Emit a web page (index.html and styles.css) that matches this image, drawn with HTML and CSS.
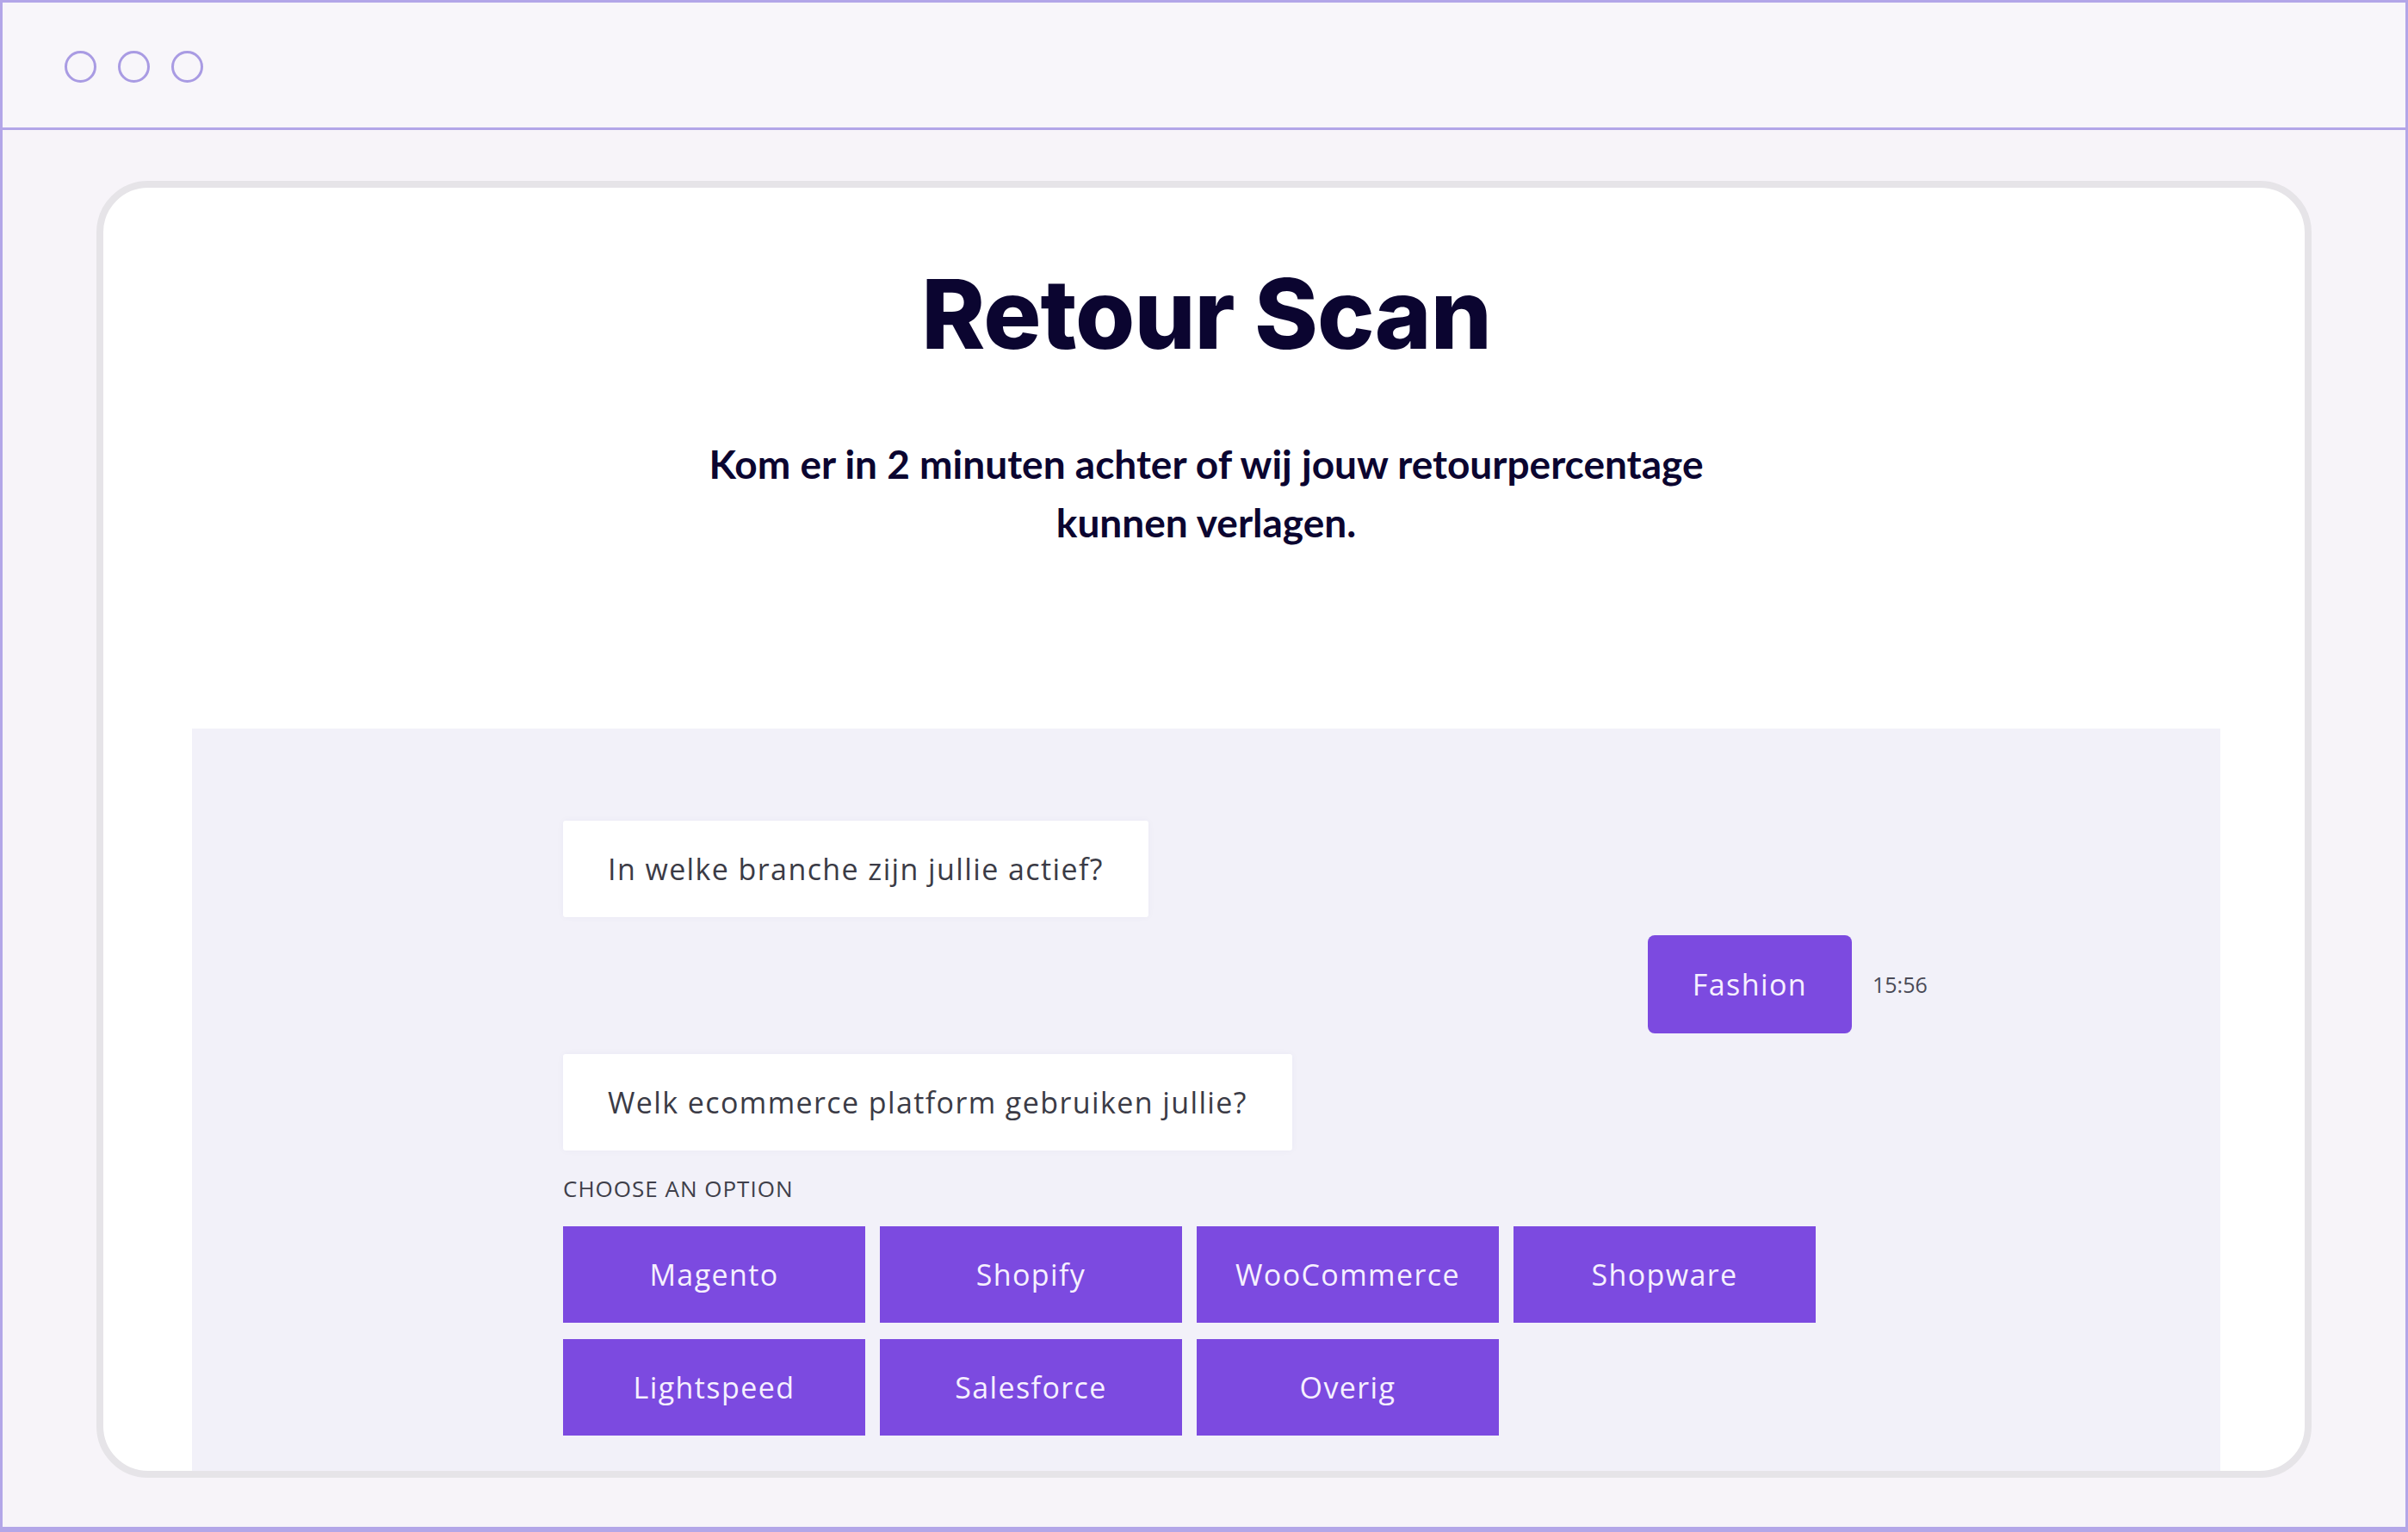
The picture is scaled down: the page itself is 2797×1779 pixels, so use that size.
FILE: index.html
```html
<!DOCTYPE html>
<html lang="nl">
  <head>
    <meta charset="UTF-8" />
    <meta name="viewport" content="width=device-width, initial-scale=1.0" />
    <title>Retour Scan</title>
    <link rel="stylesheet" href="styles.css">
  </head>
  <body>
    <div class="window">
      <!-- browser chrome -->
      <div class="titlebar">
        <span class="dot"></span>
        <span class="dot"></span>
        <span class="dot"></span>
      </div>

      <div class="content">
        <div class="card">
          <h1>Retour Scan</h1>
          <p class="intro">
            Kom er in 2 minuten achter of wij jouw retourpercentage<br />
            kunnen verlagen.
          </p>

          <div class="chat">
            <div class="thread">
              <div class="msg bot">In welke branche zijn jullie actief?</div>

              <div class="msg-row user">
                <div class="msg answer">Fashion</div>
                <span class="time">15:56</span>
              </div>

              <div class="msg bot">Welk ecommerce platform gebruiken jullie?</div>

              <div class="choose-label">CHOOSE AN OPTION</div>
              <div class="options">
                <button class="option">Magento</button>
                <button class="option">Shopify</button>
                <button class="option">WooCommerce</button>
                <button class="option">Shopware</button>
                <button class="option">Lightspeed</button>
                <button class="option">Salesforce</button>
                <button class="option">Overig</button>
              </div>
            </div>
          </div>
        </div>
      </div>
    </div>
  </body>
</html>
```

FILE: styles.css
```css
* {
  box-sizing: border-box;
}

html,
body {
  margin: 0;
  padding: 0;
  height: 100%;
}

body {
  font-family: "Open Sans", "Noto Sans", sans-serif;
  background-color: #f7f4f9;
  overflow: hidden;
}

.window {
  height: 100vh;
  display: flex;
  flex-direction: column;
  border: 3px solid #b3a6e8;
  border-bottom-width: 6px;
}

/* Title bar with the three dots */
.titlebar {
  height: 148px;
  flex-shrink: 0;
  display: flex;
  align-items: center;
  gap: 25px;
  padding: 4px 0 0 72px;
  border-bottom: 3px solid #b3a6e8;
  background-color: #f8f6fa;
}

.dot {
  width: 37px;
  height: 37px;
  border-radius: 50%;
  border: 3px solid #a99be3;
}

.content {
  flex: 1;
  display: flex;
  padding: 59px 109px 57px;
}

.card {
  flex: 1;
  display: flex;
  flex-direction: column;
  align-items: center;
  background: #fff;
  border: 8px solid #e6e4e8;
  border-radius: 60px;
  overflow: hidden;
  padding: 0 98px 0 103px;
}

h1 {
  margin: 78px 0 0;
  font-family: Inter, "Open Sans", sans-serif;
  font-weight: 800;
  font-size: 112px;
  line-height: 136px;
  letter-spacing: -1px;
  color: #0b0530;
}

.intro {
  margin: 73px 0 0;
  text-align: center;
  font-family: Lato, "Open Sans", sans-serif;
  font-weight: 700;
  font-size: 46px;
  line-height: 68px;
  color: #0b0530;
}

/* Chat area */
.chat {
  flex: 1;
  align-self: stretch;
  margin-top: 205px;
  background-color: #f2f1f9;
  display: flex;
  justify-content: center;
}

.thread {
  width: 1494px;
  padding-top: 107px;
  display: flex;
  flex-direction: column;
  align-items: flex-start;
}

.msg {
  font-size: 34px;
  line-height: 40px;
  letter-spacing: 1.4px;
  padding: 36px 52px;
}

.msg.bot {
  background: #fff;
  color: #3b3b46;
  border-radius: 3px;
  box-shadow: 0 0 8px rgba(60, 40, 120, 0.04);
}

.msg-row {
  align-self: stretch;
  display: flex;
  align-items: center;
  justify-content: flex-end;
  margin: 21px -3px 24px 0;
  position: relative;
}

.msg.answer {
  background-color: #7c4ae0;
  color: #f6f0ff;
  border-radius: 8px;
  padding: 37px 52px;
}

.time {
  position: absolute;
  left: 100%;
  margin-left: 24px;
  font-size: 25px;
  color: #4a4a56;
}

.choose-label {
  margin-top: 26px;
  font-size: 26px;
  letter-spacing: 1px;
  color: #3f3f4a;
}

.options {
  margin-top: 26px;
  display: grid;
  grid-template-columns: repeat(4, 351px);
  column-gap: 17px;
  row-gap: 19px;
}

.option {
  height: 112px;
  border: none;
  background-color: #7c4ae0;
  color: #f6f0ff;
  font-family: "Open Sans", "Noto Sans", sans-serif;
  font-size: 34px;
  letter-spacing: 1.4px;
  cursor: pointer;
}
```
